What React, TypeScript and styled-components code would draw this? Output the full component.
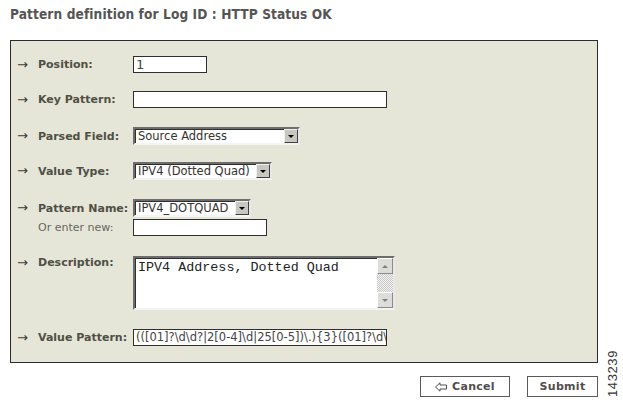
import React from "react";
import styled, { createGlobalStyle } from "styled-components";

const Global = createGlobalStyle`
  html, body { margin: 0; padding: 0; background: #ffffff; }
  body { font-family: "DejaVu Sans", Verdana, sans-serif; }
`;

const Page = styled.div`
  display: flex;
  align-items: flex-end;
  width: 623px;
  height: 404px;
  box-sizing: border-box;
  padding: 0 0 7px 10px;
`;

const Main = styled.div`
  display: flex;
  flex-direction: column;
  width: 588px;
  height: 100%;
`;

const Title = styled.h1`
  margin: 0;
  padding-top: 6px;
  height: 40px;
  box-sizing: border-box;
  font-family: "DejaVu Sans Condensed", "DejaVu Sans", sans-serif;
  font-weight: bold;
  font-size: 13.6px;
  color: #555555;
  letter-spacing: 0.1px;
`;

const Panel = styled.div`
  width: 588px;
  height: 323px;
  box-sizing: border-box;
  border: 1px solid #2d2d2d;
  background: #e6e6d8;
  padding: 15px 0 0 0;
  display: flex;
  flex-direction: column;
`;

const Row = styled.div<{ $top?: number; $align?: string }>`
  display: flex;
  align-items: ${(p) => p.$align || "center"};
  margin-top: ${(p) => p.$top || 0}px;
`;

const Arrow = styled.span`
  width: 27px;
  padding-left: 6px;
  box-sizing: border-box;
  font-size: 13px;
  line-height: 14px;
  color: #3a3a3a;
`;

const Label = styled.span`
  width: 95px;
  font-family: "DejaVu Sans", Verdana, sans-serif;
  font-weight: bold;
  font-size: 11px;
  color: #4f4f44;
  white-space: nowrap;
`;

const SubLabel = styled.span`
  width: 122px;
  padding-left: 27px;
  box-sizing: border-box;
  font-family: "DejaVu Sans", Verdana, sans-serif;
  font-size: 11px;
  color: #666660;
`;

const TextBox = styled.div<{ $w: number; $fs?: number }>`
  width: ${(p) => p.$w}px;
  height: 17px;
  box-sizing: border-box;
  border: 1px solid #2e2e2e;
  background: #ffffff;
  font-size: ${(p) => p.$fs || 11.5}px;
  line-height: 15px;
  color: #444;
  padding-left: 2px;
  overflow: hidden;
  white-space: nowrap;
`;

const SelectBox = styled.div<{ $w: number }>`
  width: ${(p) => p.$w}px;
  height: 18px;
  box-sizing: border-box;
  border-style: solid;
  border-width: 2px;
  border-color: #6d6d6d #e8e8e8 #f4f4f4 #6d6d6d;
  background: #ffffff;
  display: flex;
  align-items: center;
  font-size: 11.5px;
  color: #333;
  padding-left: 3px;
  box-shadow: inset 1px 1px 0 #2f2f2f;
`;

const SelectText = styled.span`
  flex: 1;
  white-space: nowrap;
  overflow: hidden;
`;

const DropBtn = styled.div`
  width: 14px;
  height: 14px;
  box-sizing: border-box;
  background: #c8c8c0;
  border-style: solid;
  border-width: 1px;
  border-color: #f0f0f0 #404040 #404040 #f0f0f0;
  display: flex;
  align-items: center;
  justify-content: center;
`;

const Tri = styled.div`
  width: 0;
  height: 0;
  border-left: 3px solid transparent;
  border-right: 3px solid transparent;
  border-top: 3px solid #000;
`;

const TriUp = styled(Tri)`
  border-top: 0;
  border-bottom: 3px solid #808080;
`;

const TriDown = styled(Tri)`
  border-top-color: #808080;
`;

const TextArea = styled.div`
  width: 262px;
  height: 54px;
  box-sizing: border-box;
  border-style: solid;
  border-width: 2px;
  border-color: #6d6d6d #e8e8e8 #f4f4f4 #6d6d6d;
  box-shadow: inset 1px 1px 0 #2f2f2f;
  background: #fff;
  display: flex;
`;

const AreaText = styled.div`
  flex: 1;
  font-family: "Liberation Mono", "Courier New", monospace;
  font-size: 13.4px;
  color: #222;
  padding: 2px 0 0 3px;
`;

const ScrollBar = styled.div`
  width: 16px;
  display: flex;
  flex-direction: column;
  background-color: #e4e4e4;
  background-image: repeating-conic-gradient(#c8c8c8 0 25%, #f2f2f2 0 50%);
  background-size: 2px 2px;
`;

const ScrollBtn = styled.div`
  width: 16px;
  height: 16px;
  box-sizing: border-box;
  background: #dcdcd8;
  border-style: solid;
  border-width: 1px;
  border-color: #ffffff #8a8a8a #8a8a8a #ffffff;
  display: flex;
  align-items: center;
  justify-content: center;
`;

const Spacer = styled.div`
  flex: 1;
`;

const Footer = styled.div`
  display: flex;
  justify-content: flex-end;
  gap: 17px;
  margin-top: 13px;
`;

const Button = styled.button<{ $w: number }>`
  width: ${(p) => p.$w}px;
  height: 21px;
  box-sizing: border-box;
  border: 1px solid #5a5a5a;
  background: #ffffff;
  font-family: "DejaVu Sans", Verdana, sans-serif;
  font-weight: bold;
  font-size: 11px;
  color: #4f4f4f;
  display: flex;
  align-items: center;
  justify-content: center;
  gap: 5px;
  padding: 0;
  letter-spacing: 0.3px;
`;

const Side = styled.div`
  width: 25px;
  display: flex;
  justify-content: center;
  padding-left: 4px;
  box-sizing: border-box;
`;

const FigNum = styled.span`
  writing-mode: vertical-rl;
  transform: rotate(180deg);
  font-family: "Liberation Sans", Arial, sans-serif;
  font-size: 13px;
  color: #333;
  letter-spacing: 0.6px;
`;

const BackArrow = () => (
  <svg width="12" height="10" viewBox="0 0 12 10">
    <path d="M0.5 5 L5 0.8 L5 3 L11.5 3 L11.5 7 L5 7 L5 9.2 Z" fill="none" stroke="#4f4f4f" strokeWidth="1" />
  </svg>
);

const Select = ({ w, text }: { w: number; text: string }) => (
  <SelectBox $w={w}>
    <SelectText>{text}</SelectText>
    <DropBtn>
      <Tri />
    </DropBtn>
  </SelectBox>
);

export default function App() {
  return (
    <>
      <Global />
      <Page>
        <Main>
          <Title>Pattern definition for Log ID : HTTP Status OK</Title>
          <Panel>
            <Row>
              <Arrow>→</Arrow>
              <Label>Position:</Label>
              <TextBox $w={74} $fs={13}>1</TextBox>
            </Row>
            <Row $top={18}>
              <Arrow>→</Arrow>
              <Label>Key Pattern:</Label>
              <TextBox $w={254} />
            </Row>
            <Row $top={19}>
              <Arrow>→</Arrow>
              <Label>Parsed Field:</Label>
              <Select w={167} text="Source Address" />
            </Row>
            <Row $top={17}>
              <Arrow>→</Arrow>
              <Label>Value Type:</Label>
              <Select w={139} text="IPV4 (Dotted Quad)" />
            </Row>
            <Row $top={19}>
              <Arrow>→</Arrow>
              <Label>Pattern Name:</Label>
              <Select w={118} text="IPV4_DOTQUAD" />
            </Row>
            <Row $top={2}>
              <SubLabel>Or enter new:</SubLabel>
              <TextBox $w={134} />
            </Row>
            <Row $top={20} $align="flex-start">
              <Arrow>→</Arrow>
              <Label>Description:</Label>
              <TextArea>
                <AreaText>IPV4 Address, Dotted Quad</AreaText>
                <ScrollBar>
                  <ScrollBtn>
                    <TriUp />
                  </ScrollBtn>
                  <Spacer />
                  <ScrollBtn>
                    <TriDown />
                  </ScrollBtn>
                </ScrollBar>
              </TextArea>
            </Row>
            <Row $top={19}>
              <Arrow>→</Arrow>
              <Label>Value Pattern:</Label>
              <TextBox $w={254}>{"(([01]?\\d\\d?|2[0-4]\\d|25[0-5])\\.){3}([01]?\\d\\d?|2[0-4]\\d|25[0-5])"}</TextBox>
            </Row>
          </Panel>
          <Footer>
            <Button $w={90}>
              <BackArrow />
              Cancel
            </Button>
            <Button $w={71}>Submit</Button>
          </Footer>
        </Main>
        <Side>
          <FigNum>143239</FigNum>
        </Side>
      </Page>
    </>
  );
}
